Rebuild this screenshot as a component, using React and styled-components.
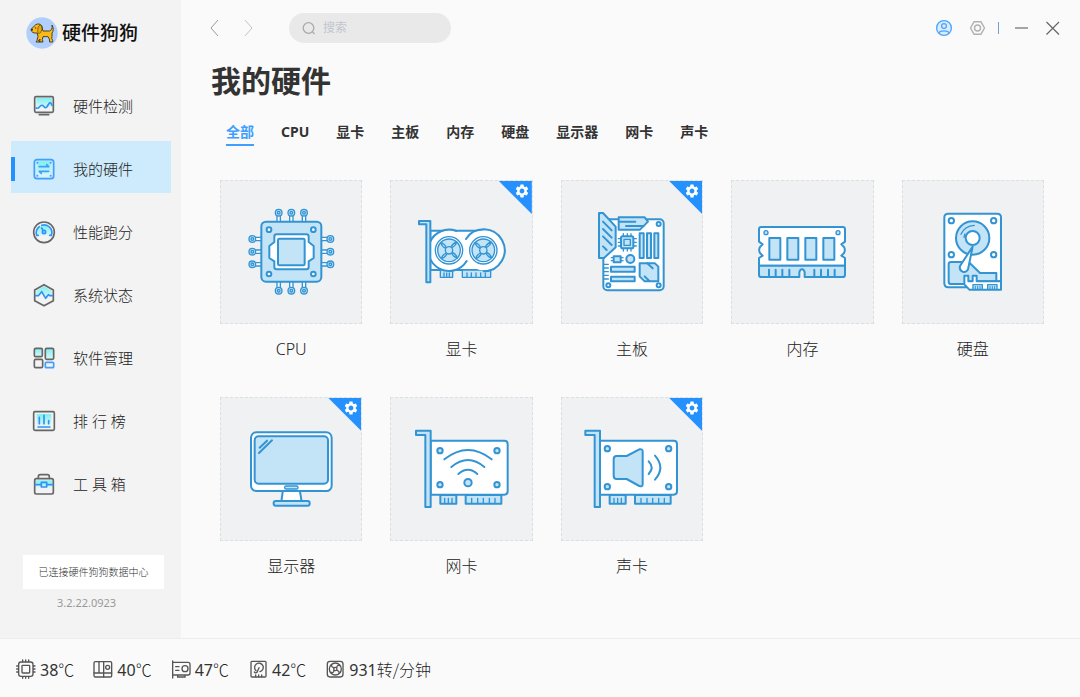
import React, { useState } from "react";
import styled, { createGlobalStyle, css } from "styled-components";
import { MdSettings } from "react-icons/md";

const GlobalStyle = createGlobalStyle`
  * {
    box-sizing: border-box;
  }
  body {
    margin: 0;
    background: #fafafa;
    color: #333;
    font-family: "Noto Sans", "Noto Sans CJK SC", sans-serif;
  }
  button {
    padding: 0;
    border: none;
    background: none;
    color: inherit;
    font: inherit;
    cursor: pointer;
  }
  svg {
    display: block;
    flex-shrink: 0;
  }
`;

const Page = styled.div`
  display: grid;
  grid-template-columns: 181px 1fr;
  grid-template-rows: 1fr auto;
  min-height: 100vh;
`;

// sidebar
const Sidebar = styled.aside`
  display: flex;
  flex-direction: column;
  background: #f3f3f3;
`;
const Brand = styled.div`
  display: flex;
  align-items: center;
  gap: 4px;
  height: 66px;
  padding-left: 26px;
  color: #111;
  font-size: 19px;
  font-weight: 500;
  line-height: 28px;
`;
const Menu = styled.nav`
  display: flex;
  flex-direction: column;
  gap: 11px;
  padding: 12px 10px 0 11px;
`;
const MenuItem = styled.a`
  display: flex;
  align-items: center;
  gap: 17px;
  height: 52px;
  padding-top: 3px;
  color: #222;
  font-size: 15px;
  font-weight: 300;
  line-height: 24px;
  text-decoration: none;

  &::before {
    content: "";
    width: 4px;
    height: 24px;
  }
  svg {
    width: 24px;
    height: 24px;
  }
  ${({ $active }) =>
    $active &&
    css`
      background: #cdebfc;
      &::before {
        background: #2491ff;
      }
    `}
`;
const Connection = styled.div`
  display: flex;
  flex-direction: column;
  align-items: stretch;
  gap: 4px;
  margin-top: auto;
  padding: 0 17px 25px 23px;
`;
const ConnectionText = styled.div`
  background: #fff;
  color: #333;
  font-size: 10px;
  font-weight: 300;
  line-height: 34px;
  text-align: center;
`;
const Version = styled.div`
  padding-right: 14px;
  color: #999;
  font-size: 11px;
  line-height: 20px;
  text-align: center;
`;

// content
const Content = styled.main`
  min-width: 0;
`;
const TopBar = styled.header`
  display: flex;
  align-items: center;
  height: 56px;
  padding: 0 17px 0 24px;
`;
const History = styled.div`
  display: flex;
  gap: 14px;
`;
const IconButton = styled.button`
  width: 20px;
  height: 20px;
`;
const SearchBox = styled.label`
  display: flex;
  align-items: center;
  gap: 7px;
  width: 162px;
  height: 30px;
  margin-left: 30px;
  padding: 0 13px;
  border-radius: 15px;
  background: #e9e9e9;
`;
const SearchInput = styled.input`
  flex: 1;
  min-width: 0;
  padding: 0;
  border: none;
  outline: none;
  background: none;
  color: #333;
  font-family: inherit;
  font-size: 12px;
  line-height: 20px;

  &::placeholder {
    color: #c2c6ce;
  }
`;
const WindowTools = styled.div`
  display: flex;
  align-items: center;
  gap: 12px;
  margin-left: auto;
`;
const Divider = styled.span`
  width: 1px;
  height: 12px;
  background: #6fa3cc;
`;
const Title = styled.h1`
  margin: 5px 0 0;
  padding-left: 30px;
  font-size: 30px;
  font-weight: 700;
  line-height: 40px;
`;
const Tabs = styled.div`
  display: flex;
  gap: 27px;
  margin-top: 21px;
  padding-left: 45px;
`;
const Tab = styled.button`
  && {
    padding-bottom: 2px;
    border-bottom: 2px solid ${({ $active }) => ($active ? "#409eff" : "transparent")};
    color: ${({ $active }) => ($active ? "#409eff" : "#333")};
    font-size: 14px;
    font-weight: 700;
    line-height: 20px;
  }
`;
const Grid = styled.div`
  display: grid;
  grid-template-columns: repeat(5, 1fr);
  gap: 36px 28px;
  padding: 34px 36px 36px 39px;
`;
const Card = styled.figure`
  display: flex;
  flex-direction: column;
  gap: 13px;
  margin: 0;
`;
const Tile = styled.div`
  position: relative;
  display: flex;
  justify-content: center;
  align-items: center;
  height: 144px;
  border: 1px dashed #dcdfe1;
  background: #eff1f3;
`;
const Art = styled.svg`
  width: 140px;
  height: 142px;
  fill: none;
  stroke: #3394d3;
  stroke-width: 6;
  stroke-linecap: round;
  stroke-linejoin: round;

  .w {
    fill: #fff;
  }
  .b {
    fill: #c3e3f7;
  }
  .thin {
    stroke-width: 4;
  }
`;
const Corner = styled.button`
  && {
    position: absolute;
    top: 0;
    right: 0;
    display: flex;
    justify-content: flex-end;
    width: 33px;
    height: 33px;
    padding: 2px;
    background: #2491ff;
    color: #fff;
    clip-path: polygon(0 0, 100% 0, 100% 100%);
  }
`;
const CardName = styled.figcaption`
  color: #222;
  font-size: 16px;
  font-weight: 300;
  line-height: 24px;
  text-align: center;
`;

// status bar
const StatusBar = styled.footer`
  grid-column: 1 / -1;
  display: flex;
  align-items: center;
  gap: 19px;
  height: 59px;
  padding: 2px 16px 0;
  border-top: 1px solid #ededed;
  background: #fafafa;
`;
const Status = styled.div`
  display: flex;
  align-items: center;
  gap: 4px;
  font-size: 16px;
  line-height: 24px;

  svg {
    width: 20px;
    height: 20px;
    fill: none;
    stroke: #555;
    stroke-width: 4;
    stroke-linecap: round;
  }
`;
const Unit = styled.span`
  color: #222;
  font-family: "Noto Sans CJK SC", sans-serif;
  font-weight: 300;
`;

const Glow = ({ id, ...rest }) => (
  <>
    <linearGradient id={id} x1="0" y1="0" x2="0" y2="1">
      <stop offset="0" stopColor="#7df0f0" />
      <stop offset="1" stopColor="#dff5f5" />
    </linearGradient>
    <rect fill={`url(#${id})`} stroke="none" {...rest} />
  </>
);

const MenuIcon = ({ children, blue }) => (
  <svg
    viewBox="0 0 72 72"
    fill="none"
    stroke={blue ? "#409eff" : "#666"}
    strokeWidth="5"
    strokeLinecap="round"
    strokeLinejoin="round"
  >
    {children}
  </svg>
);

const menu = [
  {
    name: "硬件检测",
    icon: (
      <MenuIcon>
        <Glow id="g-check" x="13" y="12" width="47" height="28" />
        <rect x="8" y="8" width="56" height="47" rx="4" />
        <path d="M22 62H50" />
        <path stroke="#2f93f5" d="M13 42C21 47 24 31 31 34S39 46 45 38S54 17 60 34" />
      </MenuIcon>
    ),
  },
  {
    name: "我的硬件",
    icon: (
      <MenuIcon blue>
        <Glow id="g-mine" x="16" y="13" width="40" height="46" />
        <rect x="7" y="8" width="58" height="57" rx="8" />
        <path d="M22 29H50L44 23M50 43H22L28 49" />
        <path strokeWidth="6" d="M16 17h0M56 17h0M16 56h0M56 56h0" />
      </MenuIcon>
    ),
  },
  {
    name: "性能跑分",
    icon: (
      <MenuIcon>
        <linearGradient id="g-speed" x1="0" y1="0" x2="0" y2="1">
          <stop offset="0" stopColor="#7df0f0" />
          <stop offset="1" stopColor="#dff5f5" />
        </linearGradient>
        <path fill="url(#g-speed)" stroke="none" d="M14 47A23 23 0 1 1 58 47Z" />
        <circle cx="36" cy="37" r="31" />
        <g stroke="#2f93f5">
          <path d="M14 46A24 24 0 0 1 22 20M29 16A23 23 0 0 1 58 46M15 46h4M57 46h-4" />
          <circle cx="36" cy="36" r="5" />
          <path d="M33 31L29 24" />
        </g>
      </MenuIcon>
    ),
  },
  {
    name: "系统状态",
    icon: (
      <MenuIcon>
        <linearGradient id="g-state" x1="0" y1="0" x2="0" y2="1">
          <stop offset="0" stopColor="#7df0f0" />
          <stop offset="1" stopColor="#dff5f5" />
        </linearGradient>
        <path fill="url(#g-state)" stroke="none" d="M36 10L59 23V36H50L42 45L29 26L19 38H13V23Z" />
        <path d="M36 5L64 21V53L36 68L8 53V21Z" />
        <path stroke="#2f93f5" d="M11 38H19L29 26L41 46L49 35L53 38H61" />
      </MenuIcon>
    ),
  },
  {
    name: "软件管理",
    icon: (
      <MenuIcon>
        <Glow id="g-soft1" x="7" y="7" width="24" height="25" />
        <Glow id="g-soft2" x="40" y="7" width="25" height="33" />
        <rect x="7" y="7" width="24" height="25" rx="4" />
        <rect x="40" y="7" width="25" height="33" rx="4" />
        <rect x="7" y="40" width="25" height="25" rx="4" />
        <rect stroke="#409eff" x="40" y="49" width="25" height="16" rx="3" />
      </MenuIcon>
    ),
  },
  {
    name: "排 行 榜",
    icon: (
      <MenuIcon>
        <Glow id="g-rank" x="14" y="15" width="44" height="34" />
        <rect x="5" y="8" width="62" height="56" rx="4" />
        <path stroke="#2f93f5" d="M22 25V44M36 19V44M50 35V44M18 54H54" />
      </MenuIcon>
    ),
  },
  {
    name: "工 具 箱",
    icon: (
      <MenuIcon>
        <Glow id="g-tool" x="10" y="25" width="52" height="22" />
        <rect x="8" y="20" width="56" height="46" rx="5" />
        <path d="M19 19V14Q19 8 25 8H46Q52 8 52 14V19" />
        <path stroke="#2f93f5" d="M10 38H27M45 38H62M28 31H44V45H28Z" />
      </MenuIcon>
    ),
  },
];

const DogLogo = () => (
  <svg width="32" height="32" viewBox="0 0 96 96">
    <circle cx="48" cy="48" r="47" fill="#b0cffc" />
    <path
      d="M16 42C14 37 16 34 22 31C26 24 32 20 39 21C46 22 50 28 49 36L51 42H70C76 41 80 34 78 24C83 33 83 42 78 48V58L77 64L80 70V75H71L70 66L66 59H51L49 67L51 75H41L42 66L37 72H42V75H30L33 70L36 59L34 48C28 49 20 48 16 42Z"
      fill="#fbb914"
      stroke="#4b4126"
      strokeWidth="3"
      strokeLinejoin="round"
    />
    <path d="M42 24C34 30 33 44 38 49C45 51 50 36 46 26Z" fill="#eda900" stroke="#4b4126" strokeWidth="2" />
    <circle cx="18" cy="38" r="3" fill="#333" />
    <circle cx="29" cy="33" r="2" fill="#333" />
  </svg>
);

// pins are drawn upright and turned around the middle of the chip
const CpuArt = () => (
  <Art viewBox="33 33 420 426">
    {[0, 90, 180, 270].map((deg) => (
      <g key={deg} className="thin" transform={`rotate(${deg} 244 245)`}>
        {[206, 244, 282].map((x) => (
          <g key={x}>
            <path className="w" d={`M${x - 5} 154V134H${x + 5}V154`} />
            <circle className="b" cx={x} cy="128" r="10" />
            <circle cx={x} cy="128" r="4" />
          </g>
        ))}
      </g>
    ))}
    <rect className="b" x="154" y="155" width="180" height="180" rx="14" />
    {[177, 310].map((x) =>
      [179, 312].map((y) => <circle key={x + y} className="w" cx={x} cy={y} r="7" />)
    )}
    <path
      className="w"
      d="M200 193H289Q296 193 296 200V216L311 228V264L296 274V291Q296 298 289 298H200Q193 298 193 291V274L178 264V228L193 216V200Q193 193 200 193Z"
    />
    <rect className="b" x="204" y="206" width="80" height="80" rx="4" />
  </Art>
);

const Fan = ({ x }) => (
  <g className="thin">
    <circle className="w" cx={x} cy="241" r="41" />
    <circle className="b" cx={x} cy="241" r="34" />
    {[0, 90, 180, 270].map((deg) => (
      <path
        key={deg}
        transform={`rotate(${deg} ${x} 241)`}
        d={`M${x - 25} 218Q${x - 14} 220 ${x - 8} 233M${x - 25} 218Q${x - 22} 229 ${x - 10} 235`}
      />
    ))}
    <circle className="b" cx={x} cy="241" r="11" />
  </g>
);

const GpuArt = () => (
  <Art viewBox="36 33 420 426">
    <path className="w" d="M151 182H311V300H151Z" />
    <path
      className="b thin"
      d="M181 300H218V322H181ZM247 300H332V322H247ZM192 309V320M200 309V320M208 309V320M261 309V320M274 309V320M288 309V320M302 309V320M316 309V320"
    />
    <circle cx="311" cy="241" r="60" fill="#fff" stroke="none" />
    <circle cx="207" cy="241" r="60" fill="#fff" stroke="none" />
    <path d="M258 207A63 63 0 1 1 311 304M260 273A62 62 0 1 1 229 183" />
    <Fan x={207} />
    <Fan x={310} />
    <path className="b" d="M117 153H151V337H139V163H117Z" />
  </Art>
);

const BoardArt = () => (
  <Art viewBox="36 33 420 426">
    <rect className="w" x="160" y="148" width="181" height="213" rx="12" />
    <path className="b" d="M147 129H159L197 170V232L162 264H147Z" />
    <path d="M159 155L185 181M159 177L185 203M159 199L185 225M159 229L170 240" />
    <path className="b" d="M206 142H284L294 155L270 179H206Z" />
    <path d="M207 155H256M228 168H281" />
    <path d="M220 191V243M232 191V243M243 191V243M205 206H259M205 217H259M205 228H259" className="thin" />
    <rect className="b" x="213" y="199" width="37" height="36" rx="5" />
    <rect className="b thin" x="222" y="208" width="19" height="18" />
    <path className="b" d="M269 190H281V264H269ZM291 190H303V264H291ZM313 190H325V264H313Z" />
    <path d="M184 263H219M184 272H219" className="thin" />
    <rect className="b" x="191" y="259" width="21" height="18" />
    <circle className="b" cx="241" cy="267" r="12" />
    <path className="b" d="M183 290H254V305H183ZM183 320H254V334H183Z" />
    <path className="b" d="M269 280H315L325 290V334H284L269 319Z" />
    <path d="M292 280L308 295M284 319L298 333" />
    <path d="M162 283H175M162 294H175M162 305H175M162 316H175M162 327H175" className="thin" />
    <circle className="w" cx="326" cy="162" r="6" />
    <circle className="w" cx="326" cy="346" r="6" />
    <circle className="w" cx="175" cy="346" r="6" />
  </Art>
);

const MemoryArt = () => (
  <Art viewBox="36 33 420 426">
    <path
      className="w"
      d="M124 171H368Q375 171 375 178V215L364 223L372 231Q377 240 372 249L364 257L375 264V287H117V264L128 257L120 249Q115 240 120 231L128 223L117 215V178Q117 171 124 171Z"
    />
    <path
      className="b"
      d="M117 287H375V314Q375 321 368 321H254V307Q252 298 246 298T238 307V321H124Q117 321 117 314Z"
    />
    <path d="M147 299V318M167 299V318M187 299V318M208 299V318M283 299V318M303 299V318M324 299V318M344 299V318" />
    {[148, 202, 256, 310].map((x) => (
      <rect key={x} className="b" x={x} y="204" width="33" height="65" />
    ))}
    <circle className="b thin" cx="138" cy="188" r="6" />
    <circle className="b thin" cx="354" cy="188" r="6" />
  </Art>
);

const DiskArt = () => (
  <Art viewBox="548 33 420 426">
    <path className="w" d="M684 131H831Q842 131 842 142V334H738V352H684Q672 352 672 340V142Q672 131 684 131Z" />
    <circle className="b" cx="757" cy="204" r="50" />
    <path d="M722 193Q732 168 762 166M731 202Q732 196 734 192" className="thin" />
    <circle className="w" cx="757" cy="204" r="21" />
    <path className="b" d="M692 276H745L779 309H828V334H738V342H692Q685 342 685 335V283Q685 276 692 276Z" />
    <path className="w" d="M757 230L743 298Q738 308 727 305Q716 300 719 288Z" />
    <path className="w" d="M732 317H744V334H757V317H769V334H842V359H747L732 343Z" />
    <path className="b thin" d="M758 344H786V358H758ZM802 344H830V358H802Z" />
    <path strokeWidth="3" d="M765 349V357M772 349V357M779 349V357M809 349V357M816 349V357M823 349V357" />
    {[693, 820].map((x) =>
      [152, 254].map((y) => <circle key={x + y} className="w" cx={x} cy={y} r="8" />)
    )}
  </Art>
);

const MonitorArt = () => (
  <Art viewBox="33 25 420 426">
    <path className="w" d="M219 300H269L275 336H214Z" />
    <rect className="w" x="123" y="128" width="242" height="176" rx="16" />
    <rect className="b" x="134" y="140" width="220" height="142" rx="12" />
    <path d="M149 174L171 153M147 190L186 152" />
    <rect className="b thin" x="224" y="289" width="40" height="9" rx="4" />
    <rect className="b" x="191" y="334" width="108" height="14" rx="6" />
  </Art>
);

const CardBase = ({ x }) => (
  <>
    <path className="w" d={`M${x + 44} 153H${x + 265}Q${x + 275} 153 ${x + 275} 163V305Q${x + 275} 315 ${x + 265} 315H${x + 44}Z`} />
    <path className="b" d={`M${x} 123H${x + 44}V352H${x + 28}V136H${x}Z`} />
    <path className="b" d={`M${x + 73} 316h48v26h-48zM${x + 149} 316h107v26h-107z`} />
    <path
      className="thin"
      d={`M${x + 86} 326v13m11-13v13m11-13v13M${x + 167} 326v13m18-13v13m17-13v13m18-13v13m17-13v13`}
    />
  </>
);

const NetArt = () => (
  <Art viewBox="36 25 420 426">
    <CardBase x={108} />
    {[180, 351].map((x) =>
      [183, 285].map((y) => <circle key={x + y} className="b" cx={x} cy={y} r="8" />)
    )}
    <path d="M193 209Q264 153 335 209M214 232Q264 190 313 232M235 253Q264 228 292 253" />
    <circle className="b" cx="264" cy="279" r="11" />
  </Art>
);

const SoundArt = () => (
  <Art viewBox="546 25 420 426">
    <CardBase x={616} />
    {[682, 866].map((x) =>
      [177, 291].map((y) => <circle key={x + y} className="b" cx={x} cy={y} r="8" />)
    )}
    <path
      className="b"
      d="M710 199H740L778 179Q788 177 788 185V284Q788 292 778 289L740 268H710Q701 268 701 258V209Q701 199 710 199Z"
    />
    <path d="M806 215Q824 234 806 253M825 198Q857 234 825 270" />
  </Art>
);

const hardware = [
  { name: "CPU", art: <CpuArt /> },
  { name: "显卡", art: <GpuArt />, setting: true },
  { name: "主板", art: <BoardArt />, setting: true },
  { name: "内存", art: <MemoryArt /> },
  { name: "硬盘", art: <DiskArt /> },
  { name: "显示器", art: <MonitorArt />, setting: true },
  { name: "网卡", art: <NetArt /> },
  { name: "声卡", art: <SoundArt />, setting: true },
];

const status = [
  {
    value: 38,
    unit: "℃",
    icon: (
      <svg viewBox="0 0 60 60">
        <rect x="8" y="9" width="43" height="43" rx="7" />
        <rect x="18" y="19" width="23" height="23" rx="2" />
        <path d="M20 3V8M29 3V8M38 3V8M20 53V58M29 53V58M38 53V58M2 21H7M2 30H7M2 39H7M52 21H57M52 30H57M52 39H57" />
      </svg>
    ),
  },
  {
    value: 40,
    unit: "℃",
    icon: (
      <svg viewBox="0 0 60 60">
        <rect x="3" y="8" width="53" height="46" rx="4" />
        <path d="M18 8V42M32 8V54M3 42H56" />
        <circle cx="44" cy="25" r="6" />
      </svg>
    ),
  },
  {
    value: 47,
    unit: "℃",
    icon: (
      <svg viewBox="0 0 60 60">
        <path d="M5 6V57M5 10H51Q57 10 57 16V42Q57 48 51 48H5M20 49V54H42V49M14 23H24M14 34H24" />
        <circle cx="42" cy="29" r="9" />
      </svg>
    ),
  },
  {
    value: 42,
    unit: "℃",
    icon: (
      <svg viewBox="0 0 60 60">
        <rect x="9" y="7" width="45" height="47" rx="3" />
        <path d="M24 35A13 13 0 1 1 36 38M33 26L27 40Q23 44 19 39M23 48V53M32 48V53M41 48V53" />
      </svg>
    ),
  },
  {
    value: 931,
    unit: "转/分钟",
    icon: (
      <svg viewBox="0 0 60 60">
        <rect x="7" y="7" width="47" height="47" rx="8" />
        <circle cx="31" cy="30" r="18" />
        <circle cx="31" cy="30" r="5" />
        <path d="M27 26Q18 24 20 18M35 26Q36 17 43 20M35 34Q44 36 42 42M27 34Q26 43 19 40" />
      </svg>
    ),
  },
];

const tabs = ["全部", "CPU", "显卡", "主板", "内存", "硬盘", "显示器", "网卡", "声卡"];

const App = () => {
  const [tab, setTab] = useState("全部");
  const [page, setPage] = useState("我的硬件");
  const [keyword, setKeyword] = useState("");

  const shown = hardware.filter((item) => tab === "全部" || item.name === tab);

  return (
    <Page>
      <GlobalStyle />
      <Sidebar>
        <Brand>
          <DogLogo />
          硬件狗狗
        </Brand>
        <Menu>
          {menu.map((item) => (
            <MenuItem key={item.name} href="#" $active={item.name === page} onClick={() => setPage(item.name)}>
              {item.icon}
              {item.name}
            </MenuItem>
          ))}
        </Menu>
        <Connection>
          <ConnectionText>已连接硬件狗狗数据中心</ConnectionText>
          <Version>3.2.22.0923</Version>
        </Connection>
      </Sidebar>

      <Content>
        <TopBar>
          <History>
            <IconButton aria-label="后退">
              <svg width="20" height="20" fill="none" stroke="#999">
                <path d="M13 2L6 10L13 18" />
              </svg>
            </IconButton>
            <IconButton aria-label="前进">
              <svg width="20" height="20" fill="none" stroke="#c4c4c4">
                <path d="M6 2L13 10L6 18" />
              </svg>
            </IconButton>
          </History>
          <SearchBox>
            <svg width="14" height="14" fill="none" stroke="#aaa" strokeWidth="1.3">
              <circle cx="6.5" cy="7" r="5.3" />
              <path d="M10.5 11L12.5 13" />
            </svg>
            <SearchInput
              aria-label="搜索"
              placeholder="搜索"
              value={keyword}
              onChange={(e) => setKeyword(e.target.value)}
            />
          </SearchBox>
          <WindowTools>
            <IconButton aria-label="账户">
              <svg width="20" height="20" fill="#dcecff" stroke="#4ba3ff" strokeWidth="1.3">
                <circle cx="10" cy="10" r="7.4" />
                <circle cx="10" cy="8" r="2.4" />
                <path d="M4.5 14.8C6.5 12.3 13.5 12.3 15.5 14.8" />
              </svg>
            </IconButton>
            <IconButton aria-label="设置">
              <svg width="20" height="20" fill="none" stroke="#b0b0b0" strokeWidth="1.4" strokeLinejoin="round">
                <path d="M8 3.8H15L18.5 10L15 16.2H8L4.5 10Z" />
                <circle cx="11.5" cy="10" r="3" />
              </svg>
            </IconButton>
            <Divider />
            <IconButton aria-label="最小化">
              <svg width="20" height="20" stroke="#777" strokeWidth="1.3">
                <path d="M4 10H17" />
              </svg>
            </IconButton>
            <IconButton aria-label="关闭">
              <svg width="20" height="20" stroke="#666" strokeWidth="1.2">
                <path d="M3.5 4L16 16.5M16 4L3.5 16.5" />
              </svg>
            </IconButton>
          </WindowTools>
        </TopBar>

        <Title>我的硬件</Title>
        <Tabs>
          {tabs.map((name) => (
            <Tab key={name} $active={name === tab} onClick={() => setTab(name)}>
              {name}
            </Tab>
          ))}
        </Tabs>

        <Grid>
          {shown.map((item) => (
            <Card key={item.name}>
              <Tile>
                {item.art}
                {item.setting && (
                  <Corner aria-label={`${item.name}设置`}>
                    <MdSettings size={16} />
                  </Corner>
                )}
              </Tile>
              <CardName>{item.name}</CardName>
            </Card>
          ))}
        </Grid>
      </Content>

      <StatusBar>
        {status.map((item) => (
          <Status key={item.value}>
            {item.icon}
            <span>
              {item.value}
              <Unit>{item.unit}</Unit>
            </span>
          </Status>
        ))}
      </StatusBar>
    </Page>
  );
};

export default App;
